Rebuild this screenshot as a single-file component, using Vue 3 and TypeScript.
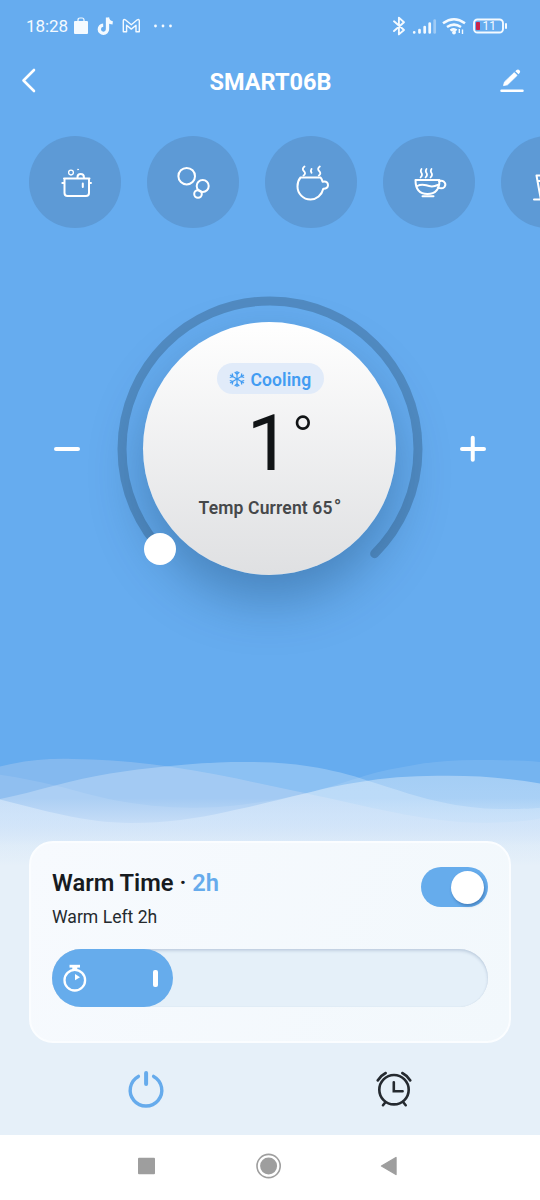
<script setup lang="ts">
import { ref, computed } from 'vue'

const modes = ['pot', 'bubbles', 'kettle', 'tea', 'glass'] as const

const target = ref(1)
const current = ref(65)
const hours = ref(2)
const keepWarm = ref(true)

const fillWidth = computed(() => `${121 + (hours.value - 2) * 31.5}px`)

function step(delta: number): void {
  target.value = Math.max(1, Math.min(100, target.value + delta))
}
</script>

<template>
  <div class="phone">
    <svg class="waves" viewBox="0 0 540 400" width="540" height="400" aria-hidden="true">
      <defs>
        <linearGradient id="haze" gradientUnits="userSpaceOnUse" x1="0" y1="800" x2="0" y2="870">
          <stop offset="0" stop-color="#dce9fa" stop-opacity="0" />
          <stop offset="0.35" stop-color="#dce9fa" stop-opacity="0.5" />
          <stop offset="0.7" stop-color="#e2eef9" stop-opacity="0.92" />
          <stop offset="1" stop-color="#e6f0f9" />
        </linearGradient>
        <linearGradient id="crest" gradientUnits="userSpaceOnUse" x1="0" y1="776" x2="0" y2="870">
          <stop offset="0" stop-color="#fff" stop-opacity=".34" />
          <stop offset=".45" stop-color="#e0eefc" stop-opacity=".5" />
          <stop offset="1" stop-color="#e6f0f9" stop-opacity="0" />
        </linearGradient>
      </defs>
      <g transform="scale(1 .968) translate(0 -740)">
        <path d="M0 776C20 779 38 783 55 787C76 792 94 798 114 802C140 807 166 810 193 810C210 810 226 809 241 807C264 804 286 800 306 795C330 789 346 783 365 777C380 772 396 769 413 766C434 762 454 760.6 475 760.6S520 761 540 762.7V1160H0Z" fill="#fff" fill-opacity=".1" />
        <path d="M0 767.5C24 761 48 759 72 759.6C108 760 140 763 172 768C220 775 262 786 306 795C365 808 425 825 482 825.5C505 825.5 525 824 540 821V1160H0Z" fill="#f2e8f3" fill-opacity=".22" />
        <path d="M0 801C18 797 37 792 55 787C92 777 128 771 165 767.5C195 764 222 762.5 248 762.7C270 762.8 290 764 310 767.5C332 771 350 776 368 782C396 791 420 800 448 805.5C470 810 490 811.5 510 811.3S530 811 540 810V1160H0Z" fill="#fff" fill-opacity=".25" />
        <rect x="0" y="800" width="540" height="360" fill="url(#haze)" />
        <path d="M0 801.5C42 812 84 825.7 131 825.7C166 825.7 196 821 227 814C256 808 280 801 306 795C328 789 346 785 368 782C394 778 420 777 448 777C482 777 514 780 540 785V870H0Z" fill="url(#crest)" />
      </g>
    </svg>

    <div class="status">
      <span class="clock">18:28</span>
      <svg class="notif" width="150" height="22" viewBox="0 0 150 22">
        <path d="M5 7.500V6q0-2 2-2h2q2 0 2 2v1.500" fill="none" stroke="#f4faff" stroke-width="1.200" />
        <rect x="1" y="7" width="14" height="13" rx="1" fill="#f4faff" />
        <path d="M34.500 3.500V15.200a4.100 4.100 0 1 1-4.300-4.100M34.500 3.500c.3 3.500 2.300 5 5.200 5.300" fill="none" stroke="#f4faff" stroke-width="3.300" />
        <path d="M50.300 17.800V6.800q0-2 2-1l6 4.900 6-4.900q2-1 2 1v11h-3.300v-6.600l-4.700 3.900-4.700-3.900v6.600z" fill="none" stroke="#f4faff" stroke-width="1.400" stroke-linejoin="round" />
        <circle cx="82.500" cy="12" r="1.400" fill="#f4faff" /><circle cx="90" cy="12" r="1.400" fill="#f4faff" /><circle cx="97.500" cy="12" r="1.400" fill="#f4faff" />
      </svg>
      <svg class="system" width="120" height="24" viewBox="0 0 120 24">
        <path d="M4 7.300 14 16 8.900 20.400V3.600L14 8.200 4 17" fill="none" stroke="#f4faff" stroke-width="1.900" stroke-linejoin="round" stroke-linecap="round" />
        <g stroke="#f4faff" stroke-width="2.700" stroke-linecap="round">
          <path d="M24.200 18.300v.1M29.500 16v2.400M34.700 13v5.400M39.700 9.500v8.900" />
          <path d="M44.700 6.500v11.900" opacity=".4" />
        </g>
        <g fill="none" stroke="#f4faff" stroke-width="2.500">
          <path d="M53 9.200q11-8 22 0M57 13.100q7-5 14 0M60.500 16.500q3.500-2.300 6 0" />
          <path d="M69.300 15v4M72.500 15.500v4.500" stroke-width="1.400" />
        </g>
        <circle cx="64" cy="18.500" r="1.900" fill="#f4faff" />
        <rect x="84" y="5.500" width="29" height="13" rx="3.500" fill="none" stroke="#f4faff" stroke-width="1.900" />
        <path d="M116 10v4" stroke="#f4faff" stroke-width="2" stroke-linecap="round" />
        <rect x="86" y="8" width="4" height="8" rx=".8" fill="#c9254b" />
        <text x="92.500" y="16.300" font-size="12" fill="#f4faff">11</text>
      </svg>
    </div>

    <header class="header">
      <svg width="24" height="30" viewBox="0 0 24 30"><path d="M16 4 5.500 14.500 16 25" fill="none" stroke="#fff" stroke-width="2.600" stroke-linecap="round" stroke-linejoin="round" /></svg>
      <h1>SMART06B</h1>
      <svg width="26" height="30" viewBox="0 0 26 30"><path d="M4.500 19.600 5.500 15.900 15.300 6.600 18.100 9.400 8.500 18.800Z" fill="#fff" stroke="#fff" stroke-width=".8" stroke-linejoin="round" /><path d="M16.300 5.200 17.500 4q1.600-1.200 3 .2t.1 2.900l-1.100 1.200z" fill="#fff" /><path d="M2.500 24.800h21" stroke="#fff" stroke-width="2.500" stroke-linecap="round" /></svg>
    </header>

    <nav class="modes">
      <button v-for="mode in modes" :key="mode" class="mode" :aria-label="mode">
        <svg width="44" height="44" viewBox="0 0 44 44" fill="none" stroke="#fff" stroke-width="2" stroke-linecap="round" stroke-linejoin="round">
          <g v-if="mode === 'pot'">
            <path d="M11 16.500h25.500M11.500 17v14q0 3 3 3h18.500q3 0 3-3V17M9.300 21h2M36 21h2M29.800 21.500v3.500" />
            <path d="M24.500 16v-1q0-3 3.200-3t3.200 3v1" /><circle cx="18" cy="10.600" r="2.400" stroke-width="1.300" /><circle cx="25" cy="7.500" r=".5" stroke-width=".9" />
          </g>
          <g v-else-if="mode === 'bubbles'"><circle cx="15.700" cy="14.200" r="8.300" /><circle cx="31.700" cy="24" r="6" /><circle cx="27" cy="32" r="3.800" /></g>
          <g v-else-if="mode === 'kettle'">
            <path d="M11.500 15.500h20c1.500 1.500 1.800 3 2.100 4.300 4-1 5.400 1.200 5.400 3.400s-2 3.800-4.700 3.600C32.900 33 27.500 37.500 21.500 37.500 14 37.500 8.500 31.500 8.500 24.500q0-5.500 3-9Z" />
            <path d="M15.500 4.500q-3 2.200-.6 4.700t-.4 4.300M30.800 4.500q-3 2.200-.6 4.700t-.4 4.300M22.500 7q-1.300 1.800 0 3.700" stroke-width="1.900" />
          </g>
          <g v-else-if="mode === 'tea'">
            <path d="M8.500 18h24q0 14-12 14t-12-14ZM32 19.500q2.500-1.500 4.700 0 3 2.600.6 5.600-2.200 2.200-6.500.5M15.500 34.200h11M10.300 24q4-2.300 9-.7 6 2.300 11.500-.3" />
            <path d="M14.500 7q-1.500 2 0 4t-1 4.500M19.500 7q-1.500 2 0 4t-1 4.500M24.500 7q-1.500 2 0 4t-1 4.500" stroke-width="1.700" />
          </g>
          <g v-else><path d="M11.500 13.500h21l-4 23.500M11.500 13.500l4.200 23M9 37.500h27M12.500 19h17M18 13q-2-3 1-6" /></g>
        </svg>
      </button>
    </nav>

    <section class="control">
      <button class="step" aria-label="decrease" @click="step(-1)"><i class="bar" /></button>
      <div class="dial">
        <svg class="ring" width="306" height="306" viewBox="0 0 306 306">
          <path d="M48.350 257.650A148 148 0 1 1 257.650 257.650" fill="none" stroke="#518bc2" stroke-width="9" stroke-linecap="round" />
        </svg>
        <div class="face">
          <div class="badge">
            <svg width="18" height="18" viewBox="0 0 18 18" fill="none" stroke="#429cf2" stroke-width="1.250">
              <g v-for="angle in [0, 60, 120, 180, 240, 300]" :key="angle" :transform="`rotate(${angle} 9 9)`"><path d="M9 9V.9M6.700 2 9 4.300l2.300-2.300" /></g>
            </svg>
            <span>Cooling</span>
          </div>
          <div class="temp"><span class="value">{{ target }}</span><span class="deg">°</span></div>
          <div class="now">Temp Current {{ current }}<span class="unit">°</span></div>
        </div>
        <i class="knob" />
      </div>
      <button class="step" aria-label="increase" @click="step(1)"><i class="bar" /><i class="bar upright" /></button>
    </section>

    <section class="card">
      <div class="card-head">
        <div>
          <h2>Warm Time · <b>{{ hours }}h</b></h2>
          <p>Warm Left {{ hours }}h</p>
        </div>
        <button class="switch" :class="{ on: keepWarm }" aria-label="keep warm" @click="keepWarm = !keepWarm"><i /></button>
      </div>
      <div class="slider">
        <div class="fill" :style="{ width: fillWidth }">
          <svg width="26" height="30" viewBox="0 0 26 30" fill="none" stroke="#fff"><circle cx="12.800" cy="17.200" r="10.300" stroke-width="2.300" /><path d="M7.500 3.200h10.500" stroke-width="2.800" /><path d="M12.800 4v3" stroke-width="5" /><path d="M13 11 18 14.300 13 17.200Z" fill="#fff" stroke="none" /></svg>
          <i class="grip" />
        </div>
      </div>
    </section>

    <div class="actions">
      <svg width="40" height="42" viewBox="0 0 40 42" fill="none" stroke="#66abec" stroke-width="3.400" stroke-linecap="round"><path d="M12.400 8.400A15.800 15.800 0 1 0 27.600 8.400" /><path d="M20.100 5v11" stroke-width="4" /></svg>
      <svg width="40" height="42" viewBox="0 0 40 42" fill="none" stroke="#252a30" stroke-width="2.600" stroke-linecap="round"><circle cx="20" cy="21.700" r="14.700" /><path d="M19.800 14.300v9h8.800M3.700 12.500q3-5 8-7.500M36.300 12.500q-3-5-8-7.500M11.200 34.500 9 37.200M29.500 34.500l2.200 2.700" /></svg>
    </div>

    <footer class="navbar">
      <svg width="28" height="28" viewBox="0 0 28 28"><rect x="6" y="5.800" width="17" height="16.500" rx="1" fill="#9e9e9e" /></svg>
      <svg width="28" height="28" viewBox="0 0 28 28"><circle cx="14.600" cy="14" r="11.600" fill="none" stroke="#9e9e9e" stroke-width="1.600" /><circle cx="14.600" cy="14" r="8.500" fill="#9e9e9e" /></svg>
      <svg width="28" height="28" viewBox="0 0 28 28"><path d="M5.500 14 20 5.500v17z" fill="#9e9e9e" stroke="#9e9e9e" stroke-width="1.400" stroke-linejoin="round" /></svg>
    </footer>
  </div>
</template>

<style>
body { margin: 0; }
</style>

<style scoped>
* { box-sizing: border-box; }
button { border: 0; padding: 0; background: none; }
svg { display: block; flex: none; }
.phone { position: relative; isolation: isolate; width: 540px; height: 1200px; overflow: hidden; display: flex; flex-direction: column; background: #66acef; font-family: Roboto, "Liberation Sans", sans-serif; }
.waves { position: absolute; left: 0; top: 740px; z-index: -1; }
.status { display: flex; height: 52px; padding: 14px 30px 0 26px; color: #f4faff; flex: none; }
.clock { width: 47px; font-size: 17px; line-height: 25px; letter-spacing: -0.1px; }
.system { margin-left: auto; }
.header { display: flex; align-items: center; justify-content: space-between; height: 58px; padding: 0 15px 0 18px; flex: none; }
h1 { margin: 1px 0 0; color: #fff; font-size: 23.500px; line-height: 30px; font-weight: 700; }
.modes { display: flex; gap: 26px; margin-top: 26px; padding-left: 29px; height: 92px; flex: none; }
.mode { display: grid; place-items: center; flex: none; width: 92px; height: 92px; border-radius: 50%; background: #5d9ad6; }
.mode svg { margin: 4px 1px 0 0; }
.control { display: flex; justify-content: space-between; align-items: center; height: 306px; margin-top: 68px; padding: 0 52px; flex: none; }
.step { display: grid; place-items: center; width: 30px; height: 40px; }
.bar { grid-area: 1 / 1; width: 26px; height: 3.500px; border-radius: 2px; background: #fff; }
.upright { transform: rotate(90deg); }
.dial { position: relative; display: grid; place-items: center; width: 306px; height: 306px; }
.ring { grid-area: 1 / 1; }
.face { grid-area: 1 / 1; display: flex; flex-direction: column; align-items: center; width: 253px; height: 253px; margin: 0 1px 1px 0; padding-top: 41px; border-radius: 50%; background: linear-gradient(#fff, #dfe0e2); box-shadow: 0 25px 52px rgba(20, 60, 100, .36); }
.badge { display: flex; align-items: center; gap: 5px; width: 107px; height: 31px; margin-left: 1px; padding-left: 11px; border-radius: 16px; background: #e1ebf9; color: #429cf2; font-size: 17.500px; font-weight: 600; letter-spacing: .1px; }
.badge span { padding-top: 3px; }
.temp { display: flex; height: 80px; margin-top: 10px; padding-left: 22px; color: #111416; }
.value { font-size: 78px; line-height: 80px; }
.deg { margin-left: 1px; font-size: 60px; line-height: 68px; font-weight: 300; }
.now { margin: 13px 0 0 1px; color: #46484a; font-size: 17.500px; line-height: 22px; font-weight: 600; letter-spacing: .15px; white-space: nowrap; }
.unit { margin-left: 1px; font-size: 20px; font-weight: 500; line-height: 20px; }
.knob { position: absolute; left: 27px; top: 236.500px; width: 32px; height: 32px; border-radius: 50%; background: #fff; }
.card { flex: none; width: 482px; height: 202px; margin: 239px 0 0 29px; padding: 24px 21px 0; border: 2px solid #fbfdff; border-radius: 24px; background: linear-gradient(115deg, #f7fafe, #f2f8fc); }
.card-head { display: flex; justify-content: space-between; height: 82px; }
h2 { margin: 2px 0 0; font-size: 23.700px; line-height: 28px; font-weight: 600; color: #171b1f; white-space: nowrap; }
h2 b { color: #66abec; font-weight: 600; }
p { margin: 9px 0 0; font-size: 17.600px; line-height: 22px; color: #252a2e; }
.switch { width: 67px; height: 40px; padding: 4px; border-radius: 20px; background: #bccbd8; }
.switch.on { background: #66acec; }
.switch i { display: block; width: 33px; height: 33px; border-radius: 50%; background: #fff; box-shadow: 1px 2px 3px rgba(25, 65, 120, .4); }
.switch.on i { margin-left: 26px; }
.slider { width: 436px; height: 58px; border-radius: 29px; background: #e5f0f9; box-shadow: inset 0 2px 3px rgba(80, 110, 150, .24), inset 0 0 1px rgba(80, 110, 150, .16); }
.fill { display: flex; justify-content: space-between; align-items: center; height: 58px; padding: 0 15px 0 10px; border-radius: 29px; background: #66acec; }
.grip { width: 5px; height: 17px; border-radius: 2px; background: #fff; }
.actions { display: flex; gap: 208px; padding-left: 126px; height: 92px; padding-top: 25px; flex: none; }
.navbar { display: flex; gap: 94px; height: 65px; padding: 17px 0 0 132px; background: #fff; flex: none; }
</style>
